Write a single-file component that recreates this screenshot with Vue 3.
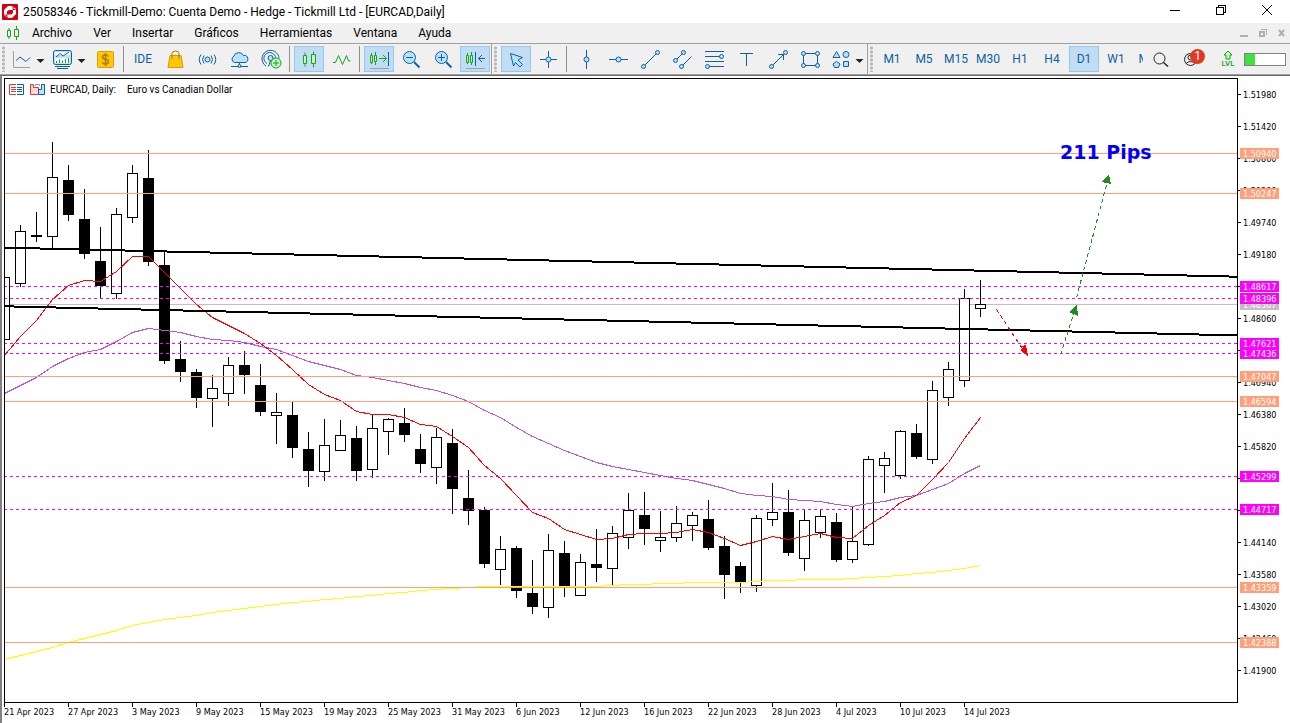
<script setup>
const menus = ['Archivo', 'Ver', 'Insertar', 'Gráficos', 'Herramientas', 'Ventana', 'Ayuda']
const timeframes = ['M1', 'M5', 'M15', 'M30', 'H1', 'H4', 'D1', 'W1', 'MN']
const activeTimeframe = 'D1'

// [high, body top, body bottom, low, filled]
const rows = [
  [277, 277, 340, 340, 0], [225, 231, 284, 287, 0], [212, 235, 237, 242, 1], [142, 177, 237, 249, 0],
  [165, 180, 215, 221, 1], [189, 219, 254, 259, 1], [227, 261, 286, 298, 1], [208, 214, 294, 299, 0],
  [165, 173, 218, 223, 0], [150, 178, 262, 266, 1], [252, 265, 361, 364, 1], [341, 359, 372, 382, 1],
  [369, 372, 398, 408, 1], [375, 388, 399, 427, 0], [357, 365, 394, 406, 0], [351, 365, 375, 394, 1],
  [364, 385, 412, 416, 1], [393, 412, 416, 444, 0], [402, 415, 448, 458, 1], [432, 449, 471, 487, 1],
  [419, 445, 472, 481, 0], [420, 435, 451, 451, 0], [426, 438, 471, 481, 1], [415, 428, 470, 478, 0],
  [418, 419, 432, 455, 0], [408, 423, 435, 442, 1], [434, 449, 464, 473, 1], [428, 437, 468, 484, 0],
  [429, 443, 489, 514, 1], [470, 498, 511, 525, 1], [507, 510, 564, 568, 1], [536, 549, 570, 585, 0],
  [546, 548, 591, 598, 1], [560, 593, 607, 614, 1], [534, 550, 608, 618, 0], [541, 553, 587, 597, 1],
  [554, 562, 596, 596, 0], [529, 564, 568, 582, 1], [526, 533, 569, 585, 0], [493, 510, 538, 549, 0],
  [492, 515, 529, 545, 1], [511, 537, 541, 552, 0], [506, 523, 538, 542, 0], [512, 515, 526, 541, 0],
  [500, 519, 548, 550, 1], [536, 546, 575, 599, 1], [562, 566, 583, 593, 1], [515, 518, 586, 592, 0],
  [483, 512, 520, 526, 0], [490, 512, 553, 556, 1], [510, 520, 559, 571, 0], [510, 516, 533, 538, 0],
  [513, 522, 560, 562, 1], [507, 541, 560, 563, 0], [456, 459, 545, 546, 0], [452, 458, 466, 493, 0],
  [430, 431, 476, 479, 0], [424, 433, 457, 459, 1], [381, 390, 460, 464, 0], [362, 369, 398, 406, 0],
  [289, 298, 381, 387, 0], [280, 304, 309, 317, 0]
]
const candles = rows.map(([high, top, bottom, low, filled], i) => ({ x: 4 + 16 * i, high, top, bottom, low, filled }))

const toPoints = ys => ys.map((y, i) => `${4.5 + 16 * i},${y + 0.5}`).join(' ')
const fastAverage = toPoints([
  355, 336, 320, 299, 285, 280, 281, 271, 256, 256, 272, 288, 304, 317, 325, 333, 343, 355, 369, 384, 394, 400,
  411, 414, 414, 417, 424, 426, 436, 447, 465, 478, 495, 512, 518, 529, 534, 539, 538, 534, 533, 533, 532, 529,
  532, 538, 545, 541, 536, 539, 536, 533, 537, 538, 525, 515, 502, 495, 479, 462, 438, 417
])
const midAverage = toPoints([
  393, 385, 377, 366, 358, 352, 349, 341, 332, 328, 330, 332, 336, 339, 340, 342, 346, 349, 355, 361, 365, 369,
  375, 377, 380, 383, 387, 390, 395, 401, 410, 417, 427, 436, 443, 450, 456, 462, 466, 469, 472, 475, 478, 480,
  484, 488, 493, 495, 496, 499, 500, 501, 504, 506, 503, 501, 497, 495, 489, 483, 473, 465
])
const slowAverage = toPoints([
  659, 655, 651, 647, 642, 638, 634, 630, 625, 622, 619, 617, 615, 612, 610, 608, 606, 604, 602, 601, 599, 598,
  596, 595, 593, 592, 590, 589, 588, 587, 586, 586, 586, 586, 586, 586, 586, 586, 585, 584, 584, 583, 583, 582,
  582, 582, 582, 581, 580, 580, 579, 579, 579, 578, 577, 576, 575, 573, 572, 570, 568, 565
])

const bid = { y: 304, price: '1.48307', kind: 'silver' }
const levels = [
  { y: 153, price: '1.50940', kind: 'salmon' },
  { y: 193, price: '1.50247', kind: 'salmon' },
  { y: 286, price: '1.48617', kind: 'magenta' },
  { y: 298, price: '1.48396', kind: 'magenta' },
  { y: 343, price: '1.47621', kind: 'magenta' },
  { y: 353, price: '1.47436', kind: 'magenta' },
  { y: 376, price: '1.47047', kind: 'salmon' },
  { y: 401, price: '1.46594', kind: 'salmon' },
  { y: 476, price: '1.45299', kind: 'magenta' },
  { y: 509, price: '1.44717', kind: 'magenta' },
  { y: 587, price: '1.43359', kind: 'salmon' },
  { y: 642, price: '1.42388', kind: 'salmon' }
]
const tags = [bid, ...levels]
const priceTicks = Array.from({ length: 19 }, (_, i) => ({ y: 94 + 32 * i, label: (1.5198 - 0.0056 * i).toFixed(5) }))
const timeTicks = [
  '21 Apr 2023', '27 Apr 2023', '3 May 2023', '9 May 2023', '15 May 2023', '19 May 2023', '25 May 2023',
  '31 May 2023', '6 Jun 2023', '12 Jun 2023', '16 Jun 2023', '22 Jun 2023', '28 Jun 2023', '4 Jul 2023',
  '10 Jul 2023', '14 Jul 2023'
].map((label, i) => ({ x: 64 * i, label }))
</script>

<template>
  <div class="app">
    <header class="titlebar">
      <svg class="logo" width="18" height="18" viewBox="0 0 18 18" aria-hidden="true">
        <rect x="1" y="1" width="16" height="16" rx="1" fill="#d4000f" />
        <path d="M7 3h4l4 3v5l-4 4H7l-4-3V7z" fill="#fff" />
        <path d="M6 10V8.500L8 7h4v2.500L10.500 11.500H6z" fill="#d4000f" />
        <path d="M12 3v3.500h2.500M6 15v-3H3.500" fill="none" stroke="#d4000f" />
      </svg>
      <h1 class="title">25058346 - Tickmill-Demo: Cuenta Demo - Hedge - Tickmill Ltd - [EURCAD,Daily]</h1>
      <div class="window-controls">
        <button type="button" aria-label="Minimizar"><svg width="12" height="12"><path d="M1 6.500h10" /></svg></button>
        <button type="button" aria-label="Restaurar"><svg width="12" height="12"><path d="M1.500 3.500h7v7h-7zM3.500 3V1.500h7v7H9" /></svg></button>
        <button type="button" aria-label="Cerrar"><svg width="12" height="12"><path class="smooth" d="M1 1l10 10M11 1L1 11" /></svg></button>
      </div>
    </header>

    <nav class="menubar">
      <svg class="menu-icon" width="16" height="16" viewBox="0 0 16 16" aria-hidden="true">
        <path d="M1.500 5.500h3v6h-3zM3 3v2.500M3 11.500V14M8.500 4.500h4v7h-4zM10.500 1v3.500M10.500 11.500V15" fill="none" stroke="#12a51e" />
      </svg>
      <button v-for="menu in menus" :key="menu" type="button" class="menu">{{ menu }}</button>
      <div class="child-controls">
        <button type="button" aria-label="Minimizar gráfico"><svg width="10" height="10"><path d="M1 8h8" stroke-width="2" /></svg></button>
        <button type="button" aria-label="Restaurar gráfico"><svg width="10" height="10"><path d="M2 4h4v4H2z" stroke-width="2" /><path d="M3 1.500h5.500V7" /></svg></button>
        <button type="button" aria-label="Cerrar gráfico"><svg width="10" height="10"><path class="smooth" d="M2 2l5 6M7 2L2 8" stroke-width="2" /></svg></button>
      </div>
    </nav>

    <div class="toolbar">
      <div class="group">
        <span class="grip"></span>
        <button type="button" class="tool wide" aria-label="Nuevo gráfico">
          <svg width="38" height="26"><path class="gray" d="M5.500 5v16.500H22" /><path class="ln" d="M8 14.500l4-3.500 6 4.500 4-4" /><path class="caret" d="M28.500 13h8l-4 4z" /></svg>
        </button>
        <button type="button" class="tool wide" aria-label="Plantillas">
          <svg width="40" height="26"><rect class="ic" x="5.500" y="4.500" width="18" height="14" rx="2" /><path class="ln" d="M7 20.500h15M9 22.500h11" /><path d="M7 12h15v5H7zM7 6h15v3H7z" fill="#fff" /><path class="ln" d="M8 11l4-3.500 3 2.500 6-4" /><path class="gr" d="M8.500 15v2M11.500 13.500V17M14.500 14.500V17M17.500 13V17M20.500 12v5" /><path class="caret" d="M29.500 13h8l-4 4z" /></svg>
        </button>
        <button type="button" class="tool" aria-label="Nueva orden">
          <svg width="30" height="26"><rect x="7.500" y="5.500" width="16" height="16" rx="1" fill="#ffc800" stroke="#d9a106" /><path d="M18.500 10.500c-.5-1-1.500-1.500-3-1.500-4 0-4 4 0 4.300 4 .4 4 4.700 0 4.700-1.800 0-2.800-.6-3.300-1.800M15.500 7v13" fill="none" stroke="#ad7900" stroke-width="1.500" /></svg>
        </button>
        <span class="sep"></span>
        <button type="button" class="tool text">IDE</button>
        <button type="button" class="tool" aria-label="Mercado">
          <svg width="30" height="26"><path d="M10 9.500h11l2 12H8z" fill="#ffc800" stroke="#d39c00" /><path d="M12 13V7.500a3.500 2.500 0 0 1 7 0V13" fill="none" stroke="#ad7900" /></svg>
        </button>
        <button type="button" class="tool" aria-label="Señales">
          <svg width="30" height="26"><circle class="ic" cx="15.500" cy="13.500" r="2.500" /><path class="ln" d="M12 9.500q-3 4 0 8M19 9.500q3 4 0 8M9 8.500q-3.500 5 0 10M22 8.500q3.500 5 0 10" /></svg>
        </button>
        <button type="button" class="tool" aria-label="VPS">
          <svg width="30" height="26"><path class="ic" d="M10.500 16.500a3.500 3.500 0 0 1-.5-6.500 5 4.500 0 0 1 9.500-.5 3.500 3.500 0 0 1 1.500 7z" /><path class="ln" d="M15.500 16.500v3M7 20.500h17" /><circle class="ic" cx="15.500" cy="20" r="1.500" /></svg>
        </button>
        <button type="button" class="tool" aria-label="Conectar">
          <svg width="30" height="26"><path class="ln" d="M10 20a8.500 8.500 0 1 1 13-7.500M11 17.500a5.800 5.800 0 1 1 8.500-5.500" /><circle class="ic" cx="14.500" cy="12" r="2.500" /><path class="ln" d="M14.500 14.500l-2 6" /><circle cx="20" cy="17" r="5" fill="#c8f5c8" stroke="#12a51e" /><path class="gr" d="M17 17h6M20 14v6" /></svg>
        </button>
        <span class="sep"></span>
        <button type="button" class="tool active" aria-label="Velas">
          <svg width="30" height="26"><path class="gf" d="M9.500 9.500h3v8h-3zM17.500 8.500h4v9h-4z" /><path class="gr" d="M11 6.500v3M11 17.500v3M19.500 5.500v3M19.500 17.500v4" /></svg>
        </button>
        <button type="button" class="tool" aria-label="Líneas">
          <svg width="30" height="26"><path class="gr" d="M7 16.500h2.500l3-7 4 9 4-9 2 5.500h2" /></svg>
        </button>
        <span class="sep"></span>
        <button type="button" class="tool active" aria-label="Desplazar gráfico">
          <svg width="30" height="26"><path class="gf" d="M6.500 9.500h2v7h-2zM10.500 9.500h2v6h-2z" /><path class="gr" d="M7.500 7v2.500M7.500 16.500V18M11.500 6v3.500M11.500 15.500V19M15 12.500h7M19 9l3.500 3.500L19 16" /><path class="ln" d="M24.500 6v14" /><path class="gray" d="M6 22.500h19" /></svg>
        </button>
        <button type="button" class="tool" aria-label="Reducir">
          <svg width="30" height="26"><circle class="ic" cx="13.500" cy="11.500" r="6" /><path class="ln" d="M10 11.500h7" /><path class="ln thick" d="M18 16l5.500 5.500" /></svg>
        </button>
        <button type="button" class="tool" aria-label="Ampliar">
          <svg width="30" height="26"><circle class="ic" cx="13.500" cy="11.500" r="6" /><path class="ln" d="M10 11.500h7M13.500 8v7" /><path class="ln thick" d="M18 16l5.500 5.500" /></svg>
        </button>
        <button type="button" class="tool active" aria-label="Desplazamiento automático">
          <svg width="30" height="26"><path class="gf" d="M6.500 9.500h2v7h-2zM10.500 9.500h2v7h-2z" /><path class="gr" d="M7.500 7v2.500M7.500 16.500V18M11.500 6v3.500M11.500 16.500V19" /><path class="ln" d="M15.500 6v14M18.500 12.500H25M22 9l-3.500 3.500L22 16" /><path class="gray" d="M6 22.500h19" /></svg>
        </button>
      </div>

      <div class="group">
        <span class="grip"></span>
        <button type="button" class="tool active" aria-label="Cursor">
          <svg width="30" height="26"><path class="ic" d="M9.500 7.500l12 4-4.500 2.500 4.500 4.500-2.500 2.500-4.500-4.500-2 3.500z" /></svg>
        </button>
        <button type="button" class="tool" aria-label="Cruz">
          <svg width="30" height="26"><path class="ln" d="M7 13.500h17M15.500 5v17" /><circle class="ic" cx="15.500" cy="13.500" r="2.500" /></svg>
        </button>
        <span class="sep"></span>
        <button type="button" class="tool" aria-label="Línea vertical">
          <svg width="30" height="26"><path class="ln" d="M15.500 4v19" /><circle class="ic" cx="15.500" cy="13.500" r="2.500" /></svg>
        </button>
        <button type="button" class="tool" aria-label="Línea horizontal">
          <svg width="30" height="26"><path class="ln" d="M6 13.500h19" /><circle class="ic" cx="15.500" cy="13.500" r="2.500" /></svg>
        </button>
        <button type="button" class="tool" aria-label="Línea de tendencia">
          <svg width="30" height="26"><path class="ln" d="M8.500 20.500l14-14" /><circle class="ic" cx="8.500" cy="20.500" r="2" /><circle class="ic" cx="22.500" cy="6.500" r="2" /></svg>
        </button>
        <button type="button" class="tool" aria-label="Canal equidistante">
          <svg width="30" height="26"><path class="ln" d="M8.500 14.500l8-8M14.500 20.500l10-10" /><circle class="ic" cx="8.500" cy="14.500" r="2" /><circle class="ic" cx="16.500" cy="6.500" r="2" /><circle class="ic" cx="14.500" cy="20.500" r="2" /></svg>
        </button>
        <button type="button" class="tool" aria-label="Fibonacci">
          <svg width="30" height="26"><path class="ln" d="M6 5.500h19M6 10.500h15M6 15.500h19M10 20.500h15" /><circle class="ic" cx="22.500" cy="10.500" r="2" /><circle class="ic" cx="8.500" cy="20.500" r="2" /></svg>
        </button>
        <button type="button" class="tool" aria-label="Texto">
          <svg width="30" height="26"><path class="ln" d="M9 7.500h13M15.500 7.500V20" /></svg>
        </button>
        <button type="button" class="tool" aria-label="Flecha">
          <svg width="30" height="26"><circle class="ic" cx="8.500" cy="20.500" r="2" /><circle class="ic" cx="22.500" cy="6.500" r="2" /><path class="ln" d="M10 19L20.500 8.500M15 8.500h5.500V14" /></svg>
        </button>
        <button type="button" class="tool" aria-label="Rectángulo">
          <svg width="30" height="26"><path class="ln" d="M8.500 7.500h14v12h-14z" /><circle class="ic" cx="8.500" cy="7.500" r="2" /><circle class="ic" cx="22.500" cy="7.500" r="2" /><circle class="ic" cx="8.500" cy="19.500" r="2" /><circle class="ic" cx="22.500" cy="19.500" r="2" /></svg>
        </button>
        <button type="button" class="tool wide" aria-label="Figuras">
          <svg width="39" height="26"><path class="ic" d="M9.500 5.500l3.500 6H6zM9.500 15.500l3.500 2.500-1.500 3.500h-4L6 18zM16.500 15.500h5v5h-5z" /><circle class="ic" cx="19" cy="8.500" r="3" /><path class="caret" d="M28.500 13h8l-4 4z" /></svg>
        </button>
      </div>

      <div class="group timeframes">
        <span class="grip"></span>
        <button v-for="tf in timeframes" :key="tf" type="button" class="tool text" :class="{ active: tf === activeTimeframe }">{{ tf }}</button>
      </div>

      <div class="status">
        <button type="button" class="tool" aria-label="Buscar">
          <svg width="30" height="26"><circle cx="13.500" cy="12.500" r="5.500" fill="none" stroke="#222" /><path d="M17.500 16.500l4.500 4" fill="none" stroke="#222" stroke-width="1.500" /></svg>
        </button>
        <button type="button" class="tool account" aria-label="Notificaciones">
          <svg width="30" height="26"><circle cx="13.500" cy="13.500" r="6" fill="none" stroke="#222" /><circle cx="13.500" cy="11.500" r="2.500" fill="none" stroke="#222" /><path d="M9 17.500q4.500-4 9 0" fill="none" stroke="#222" /></svg>
          <span class="badge">1</span>
        </button>
        <div class="level">
          <svg width="12" height="10"><path d="M6 1l4 4H8v4H4V5H2z" fill="#c8f5c8" stroke="#12a51e" /></svg>
          <span>LVL</span>
        </div>
        <progress class="meter" value="24" max="100" aria-label="Nivel"></progress>
      </div>
    </div>

    <main class="chart">
      <div class="plot">
        <svg class="canvas" role="img" aria-label="EURCAD, Daily">
          <line class="crisp level-line silver" x1="-1" x2="100%" :y1="bid.y - 78.5" :y2="bid.y - 78.5" />
          <g transform="translate(-5 -79)">
            <g class="crisp">
              <g v-for="c in candles" :key="c.x">
                <rect :x="c.x" :y="c.high" width="1" :height="c.low - c.high" />
                <rect :x="c.x - 5" :y="c.top" width="11" :height="c.bottom - c.top" />
                <rect v-if="!c.filled" :x="c.x - 4" :y="c.top + 1" width="9" :height="c.bottom - c.top - 2" fill="#fff" />
              </g>
              <polyline class="curve" :points="slowAverage" stroke="#ffff00" />
              <polyline class="curve" :points="midAverage" stroke="#ba55d3" />
              <polyline class="curve" :points="fastAverage" stroke="#ff0000" />
            </g>
          </g>
          <g class="crisp">
            <line v-for="l in levels" :key="l.price" x1="-1" x2="100%" :y1="l.y - 78.5" :y2="l.y - 78.5" :class="['level-line', l.kind]" />
          </g>
          <g transform="translate(-5 -79)">
            <g class="crisp">
              <path class="trend" d="M5 247.700L1237 276.700M5 306.300L1237 335.400" />
              <path class="dash" d="M996.500 309.500L1023 349.500" stroke="#ff0000" />
              <path class="dash" d="M1060.500 354.500L1074 313M1076.500 297.500L1107 183" stroke="#228b22" />
              <path d="M1028 356l-8-6 3-2-1-2 4-1z" fill="#ff0000" />
              <path d="M1077 305l-8 7 9 4zM1109 174l-8 8 10 2z" fill="#228b22" />
            </g>
            <text class="pips" x="1060" y="159">211 Pips</text>
            <g fill="none">
              <path d="M16 84.500H9.500v10H16M11 87.500h5M11 89.500h5M11 91.500h5" stroke="#e03a3a" />
              <path d="M17 84.500h6.500v10H17M17 87.500h5M17 89.500h5M17 91.500h5" stroke="#0b61a4" />
              <path d="M30.500 84.500h3v3h5v7h-8z" stroke="#e03a3a" fill="#ffd9d9" />
              <path d="M38.500 94.500v-5h3v-5h3v10z" stroke="#0b61a4" fill="#c2e2f8" />
              <path d="M35.500 86v-1.500h4V86" stroke="#999" />
            </g>
            <text class="caption" x="50" y="93">EURCAD, Daily:</text>
            <text class="caption" x="127" y="93">Euro vs Canadian Dollar</text>
          </g>
        </svg>
      </div>
      <svg class="price-axis" aria-hidden="true">
        <g transform="translate(0 -78)">
          <g v-for="t in priceTicks" :key="t.label">
            <rect class="crisp" x="0" :y="t.y" width="3" height="1" />
            <text x="5" :y="t.y + 4">{{ t.label }}</text>
          </g>
          <g v-for="l in tags" :key="l.price" :class="['tag', l.kind]">
            <rect class="crisp" x="2" :y="l.y - 5" width="39" height="11" />
            <text x="5" :y="l.y + 4">{{ l.price }}</text>
          </g>
        </g>
      </svg>
      <svg class="time-axis" aria-hidden="true">
        <g v-for="t in timeTicks" :key="t.label">
          <rect class="crisp" :x="t.x" y="0" width="1" height="4" />
          <text :x="t.x" y="12">{{ t.label }}</text>
        </g>
      </svg>
    </main>
  </div>
</template>

<style>
body { margin: 0; background: #fff; }
</style>

<style scoped>
.app { display: flex; flex-direction: column; min-height: 100vh; overflow: hidden; font-family: Roboto, "Open Sans", sans-serif; font-size: 12px; color: #000; background: #fff; }
button { margin: 0; padding: 0; border: 0; background: none; font: inherit; color: inherit; }
svg { display: block; }
.crisp { shape-rendering: crispEdges; }

.titlebar { display: flex; align-items: center; height: 23px; padding-left: 1px; }
.logo { flex: none; margin-right: 4px; }
.title { flex: 1; margin: 0; font-size: 12px; font-weight: 400; line-height: 22px; white-space: nowrap; }
.window-controls { display: flex; }
.window-controls button { display: flex; justify-content: center; width: 46px; height: 23px; padding-top: 4px; }
.window-controls path { fill: none; stroke: #000; shape-rendering: crispEdges; }
.window-controls .smooth, .child-controls .smooth { shape-rendering: auto; }

.menubar { display: flex; align-items: center; height: 20px; background: #f0f0f0; }
.menu-icon { margin: 0 0 0 6px; }
.menu { padding: 0 10px; line-height: 20px; }
.menu + .menu { margin-left: 1px; }
.child-controls { display: flex; gap: 9px; margin-left: auto; padding-right: 3px; }
.child-controls path { fill: none; stroke: #b0b0b0; shape-rendering: crispEdges; }

.toolbar { display: flex; height: 30px; border-top: 1px solid #a0a0a0; border-bottom: 1px solid #a0a0a0; background: #f0f0f0; overflow: hidden; }
.group { display: flex; flex: none; align-items: center; gap: 2px; padding: 0 1px 0 2px; border-right: 1px solid #a0a0a0; }
.grip { flex: none; width: 3px; height: 26px; margin-right: 1px; background: radial-gradient(circle, #b4b4b4 1px, transparent 2px) 0 0 / 3px 4px; }
.group + .group .grip { margin-right: 2px; }
.sep { flex: none; width: 1px; height: 26px; margin: 0 2px 0 1px; background: #909090; }
.tool { display: flex; flex: none; align-items: center; justify-content: center; box-sizing: border-box; width: 30px; height: 26px; }
.tool.wide { width: auto; }
.tool.text { line-height: 26px; color: #0b61a4; }
.tool.active { background: #c2ddf3; box-shadow: inset 0 0 0 1px #90c8f6; }
.timeframes { flex: 1; min-width: 0; border-right: 0; padding-right: 0; overflow: hidden; }
.ln { fill: none; stroke: #0b61a4; }
.thick { stroke-width: 2; }
.ic { fill: #b9e2fa; stroke: #0b61a4; }
.gr { fill: none; stroke: #12a51e; }
.gf { fill: #c8f5c8; stroke: #12a51e; }
.gray { fill: none; stroke: #a0a0a0; }
.caret { fill: #222; }

.status { display: flex; flex: none; align-items: center; padding: 0 4px 0 3px; }
.account { position: relative; width: 32px; }
.badge { position: absolute; top: 3px; left: 14px; width: 15px; height: 15px; border-radius: 50%; background: #e23a22; color: #fff; font-size: 12px; line-height: 15px; text-align: center; }
.level { display: flex; flex-direction: column; align-items: center; box-sizing: border-box; width: 36px; padding-left: 4px; font-size: 8px; font-weight: 500; line-height: 8px; color: #12a51e; }
.meter { appearance: none; box-sizing: border-box; width: 42px; height: 13px; border: 1px solid #828282; background: #fff; }
.meter::-webkit-progress-bar { background: #fff; }
.meter::-webkit-progress-value { background: #40e040; }

.chart { flex: 1; display: grid; grid-template-columns: minmax(0, 1fr) 52px; grid-template-rows: minmax(0, 1fr) 20px; padding: 2px 0 0 2px; border-top: 1px solid #696969; border-left: 2px solid #808080; }
.plot { border: 1px solid #000; min-height: 623px; overflow: hidden; }
.canvas { width: 100%; height: 100%; min-height: 623px; }
.price-axis { width: 52px; height: 100%; }
.time-axis { grid-column: 1 / 3; width: 100%; height: 20px; }
text { font-family: "DejaVu Sans Condensed", "DejaVu Sans", sans-serif; font-size: 9px; }
.caption { font-family: Roboto, "Open Sans", sans-serif; font-size: 10px; }
.pips { font-family: "DejaVu Sans", sans-serif; font-size: 19px; font-weight: 700; fill: #0000ff; }
.curve { fill: none; stroke-width: 1; }
.trend { fill: none; stroke: #000; stroke-width: 2; }
.dash { fill: none; stroke-dasharray: 4 3; }
.level-line.salmon { stroke: #ffa07a; }
.level-line.silver { stroke: #c0c0c0; }
.level-line.magenta { stroke: #ff00ff; stroke-dasharray: 3 3; }
.tag.salmon { fill: #ffa07a; }
.tag.silver { fill: #c0c0c0; }
.tag.magenta { fill: #ff00ff; }
.tag text { fill: #fff; }
</style>
